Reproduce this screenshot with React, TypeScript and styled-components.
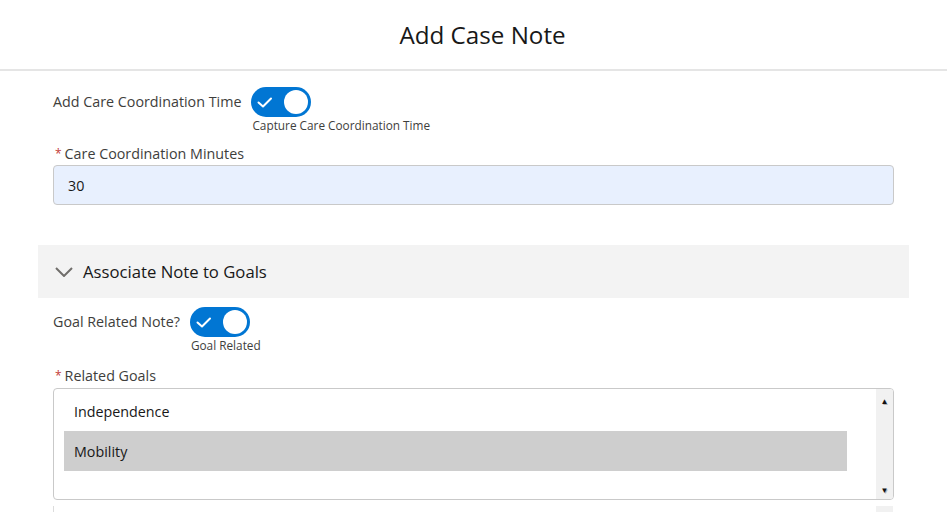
import styled, { createGlobalStyle } from "styled-components";

const GlobalStyle = createGlobalStyle`
  html, body {
    margin: 0;
    padding: 0;
    background: #ffffff;
    overflow: hidden;
  }
  body {
    font-family: "Open Sans", "Noto Sans", Arial, sans-serif;
    color: #181818;
  }
`;

const Page = styled.div`
  width: 947px;
  height: 512px;
  overflow: hidden;
`;

const Header = styled.header`
  height: 69px;
  border-bottom: 2px solid #e5e5e5;
  display: flex;
  align-items: center;
  justify-content: center;
  padding-left: 18px;
`;

const Title = styled.h1`
  margin: 0;
  font-size: 24.2px;
  font-weight: 400;
  color: #181818;
`;

const Body = styled.main`
  padding: 16px 38px 0;
  display: flex;
  flex-direction: column;
`;

const Fields = styled.div`
  padding: 0 15px;
  display: flex;
  flex-direction: column;
`;

const ToggleRow = styled.div`
  display: flex;
  align-items: flex-start;
  gap: 10px;
`;

const FieldLabel = styled.span`
  font-size: 14.3px;
  color: #3e3e3c;
  line-height: 30px;
`;

const ToggleWrap = styled.div`
  display: flex;
  flex-direction: column;
`;

const Track = styled.div`
  width: 60px;
  height: 30px;
  border-radius: 15px;
  background: #0176d3;
  box-sizing: border-box;
  padding: 3px;
  display: flex;
  align-items: center;
  justify-content: space-between;
`;

const Knob = styled.div`
  width: 24px;
  height: 24px;
  border-radius: 50%;
  background: #ffffff;
`;

const HelpText = styled.span`
  font-size: 11.8px;
  color: #3e3e3c;
  margin-left: 1px;
  line-height: 16px;
`;

const RequiredLabel = styled.label<{ $top: number }>`
  display: flex;
  align-items: center;
  margin-top: ${({ $top }) => $top}px;
  font-size: 14.3px;
  color: #3e3e3c;
  line-height: 20px;
`;

const Star = styled.abbr`
  color: #c23934;
  text-decoration: none;
  font-size: 12px;
  margin: 0 3px 0 2px;
`;

const TextInput = styled.div`
  margin-top: 1px;
  height: 40px;
  box-sizing: border-box;
  border: 1px solid #c9c9c9;
  border-radius: 4px;
  background: #e8f0fe;
  display: flex;
  align-items: center;
  padding-left: 14px;
  font-size: 14.3px;
  color: #181818;
`;

const SectionHeader = styled.div`
  margin-top: 40px;
  height: 53px;
  background: #f3f3f3;
  display: flex;
  align-items: center;
  padding-left: 17px;
  gap: 10px;
  margin-bottom: 9px;
`;

const SectionTitle = styled.span`
  font-size: 16.7px;
  color: #181818;
`;

const ListBox = styled.div<{ $height: number }>`
  margin-top: 2px;
  height: ${({ $height }) => $height}px;
  box-sizing: border-box;
  border: 1px solid #c9c9c9;
  border-radius: 4px;
  display: flex;
  overflow: hidden;
`;

const Options = styled.ul`
  list-style: none;
  margin: 0;
  padding: 2px 29px 0 10px;
  flex: 1;
`;

const Option = styled.li<{ $selected?: boolean }>`
  height: 40px;
  display: flex;
  align-items: center;
  padding-left: 10px;
  font-size: 14.3px;
  color: #181818;
  background: ${({ $selected }) => ($selected ? "#cecece" : "transparent")};
`;

const ScrollBar = styled.div`
  width: 17px;
  background: #f1f1f1;
  display: flex;
  flex-direction: column;
  justify-content: space-between;
  align-items: center;
  padding: 6px 0 4px;
  font-size: 8px;
  color: #111;
  text-shadow: 1px 1px 0 #b5b5b5;
`;

const NextBox = styled.div`
  margin-top: 6px;
  height: 40px;
  border-left: 1px solid #dcdcdc;
  display: flex;
  justify-content: flex-end;
  padding-right: 1px;
`;

const NextScroll = styled.div`
  width: 17px;
  background: #f1f1f1;
`;

function Toggle({ help }: { help: string }) {
  return (
    <ToggleWrap>
      <Track>
        <svg width="22" height="22" viewBox="0 0 22 22">
          <path d="M4.5 11.5 L9 15.5 L17 7.5" fill="none" stroke="#fff" strokeWidth="2" strokeLinecap="round" strokeLinejoin="round" />
        </svg>
        <Knob />
      </Track>
      <HelpText>{help}</HelpText>
    </ToggleWrap>
  );
}

export default function App() {
  return (
    <Page>
      <GlobalStyle />
      <Header>
        <Title>Add Case Note</Title>
      </Header>
      <Body>
        <Fields>
          <ToggleRow>
            <FieldLabel>Add Care Coordination Time</FieldLabel>
            <Toggle help="Capture Care Coordination Time" />
          </ToggleRow>
          <RequiredLabel $top={11}>
            <Star>*</Star>Care Coordination Minutes
          </RequiredLabel>
          <TextInput>30</TextInput>
        </Fields>
        <SectionHeader>
          <svg width="18" height="10" viewBox="0 0 18 10">
            <path d="M1 1 L9 9 L17 1" fill="none" stroke="#706e6b" strokeWidth="2" />
          </svg>
          <SectionTitle>Associate Note to Goals</SectionTitle>
        </SectionHeader>
        <Fields>
          <ToggleRow>
            <FieldLabel>Goal Related Note?</FieldLabel>
            <Toggle help="Goal Related" />
          </ToggleRow>
          <RequiredLabel $top={13}>
            <Star>*</Star>Related Goals
          </RequiredLabel>
          <ListBox $height={112}>
            <Options>
              <Option>Independence</Option>
              <Option $selected>Mobility</Option>
            </Options>
            <ScrollBar>
              <span>▲</span>
              <span>▼</span>
            </ScrollBar>
          </ListBox>
          <NextBox>
            <NextScroll />
          </NextBox>
        </Fields>
      </Body>
    </Page>
  );
}
